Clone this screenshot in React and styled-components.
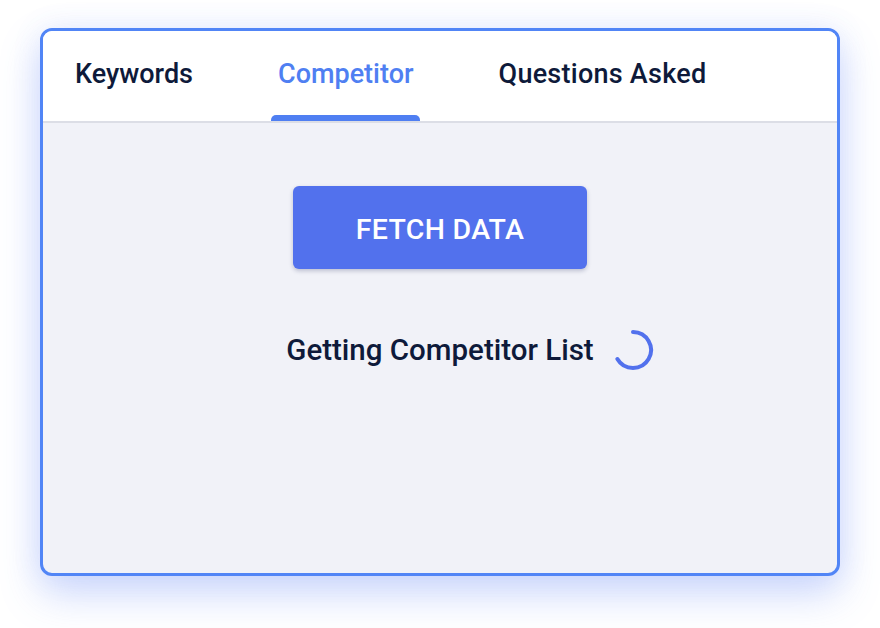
import React from "react";
import styled, { createGlobalStyle } from "styled-components";

const Global = createGlobalStyle`
  html, body { margin: 0; padding: 0; background: #ffffff; }
  body { font-family: Roboto, "Noto Sans", sans-serif; }
`;

const Page = styled.div`
  padding: 28px 40px;
  width: 880px;
  height: 628px;
  box-sizing: border-box;
`;

const Card = styled.div`
  width: 800px;
  height: 548px;
  box-sizing: border-box;
  border: 3px solid #5185f6;
  border-radius: 12px;
  overflow: hidden;
  background: #f1f2f8;
  display: flex;
  flex-direction: column;
  box-shadow: 0 18px 40px rgba(80, 120, 245, 0.28), 0 0 30px rgba(80, 120, 245, 0.1);
`;

const TabBar = styled.div`
  height: 90px;
  background: #ffffff;
  border-bottom: 2px solid #dcdee6;
  display: flex;
  align-items: stretch;
  padding-left: 25px;
  gap: 72px;
`;

const Tab = styled.div`
  position: relative;
  display: flex;
  align-items: center;
  padding: 0 6px 4px 7px;
  font-size: 27px;
  font-weight: 500;
  letter-spacing: ${(p) => (p.$wide ? "0.25px" : "0")};
  color: ${(p) => (p.$active ? "#4f7ff2" : "#0e1a3a")};
  &::after {
    content: "";
    display: ${(p) => (p.$active ? "block" : "none")};
    position: absolute;
    left: 0;
    right: 0;
    bottom: 0;
    height: 6px;
    border-radius: 5px 5px 0 0;
    background: #4f7ff2;
  }
`;

const Content = styled.div`
  flex: 1;
  display: flex;
  flex-direction: column;
  align-items: center;
  padding-top: 63px;
`;

const Button = styled.button`
  width: 294px;
  height: 83px;
  padding-top: 4px;
  border: none;
  border-radius: 6px;
  background: #5271ed;
  color: #ffffff;
  font-family: Roboto, sans-serif;
  font-size: 28.5px;
  font-weight: 500;
  letter-spacing: 0.3px;
  box-shadow: 0 2px 4px rgba(30, 40, 90, 0.25);
  cursor: pointer;
`;

const Status = styled.div`
  position: relative;
  margin-top: 63px;
  font-size: 29.5px;
  font-weight: 500;
  color: #0e1a3a;
  line-height: 36px;
`;

const Spinner = styled.svg`
  position: absolute;
  left: calc(100% + 18px);
  top: 50%;
  transform: translateY(-50%);
`;

export default function App() {
  return (
    <Page>
      <Global />
      <Card>
        <TabBar>
          <Tab>Keywords</Tab>
          <Tab $active>Competitor</Tab>
          <Tab $wide>Questions Asked</Tab>
        </TabBar>
        <Content>
          <Button>FETCH DATA</Button>
          <Status>
            Getting Competitor List
            <Spinner width="42" height="42" viewBox="0 0 42 42">
              <path
                d="M21 3 A18 18 0 1 1 5.4 30"
                fill="none"
                stroke="#5271ed"
                strokeWidth="4"
                strokeLinecap="round"
              />
            </Spinner>
          </Status>
        </Content>
      </Card>
    </Page>
  );
}
